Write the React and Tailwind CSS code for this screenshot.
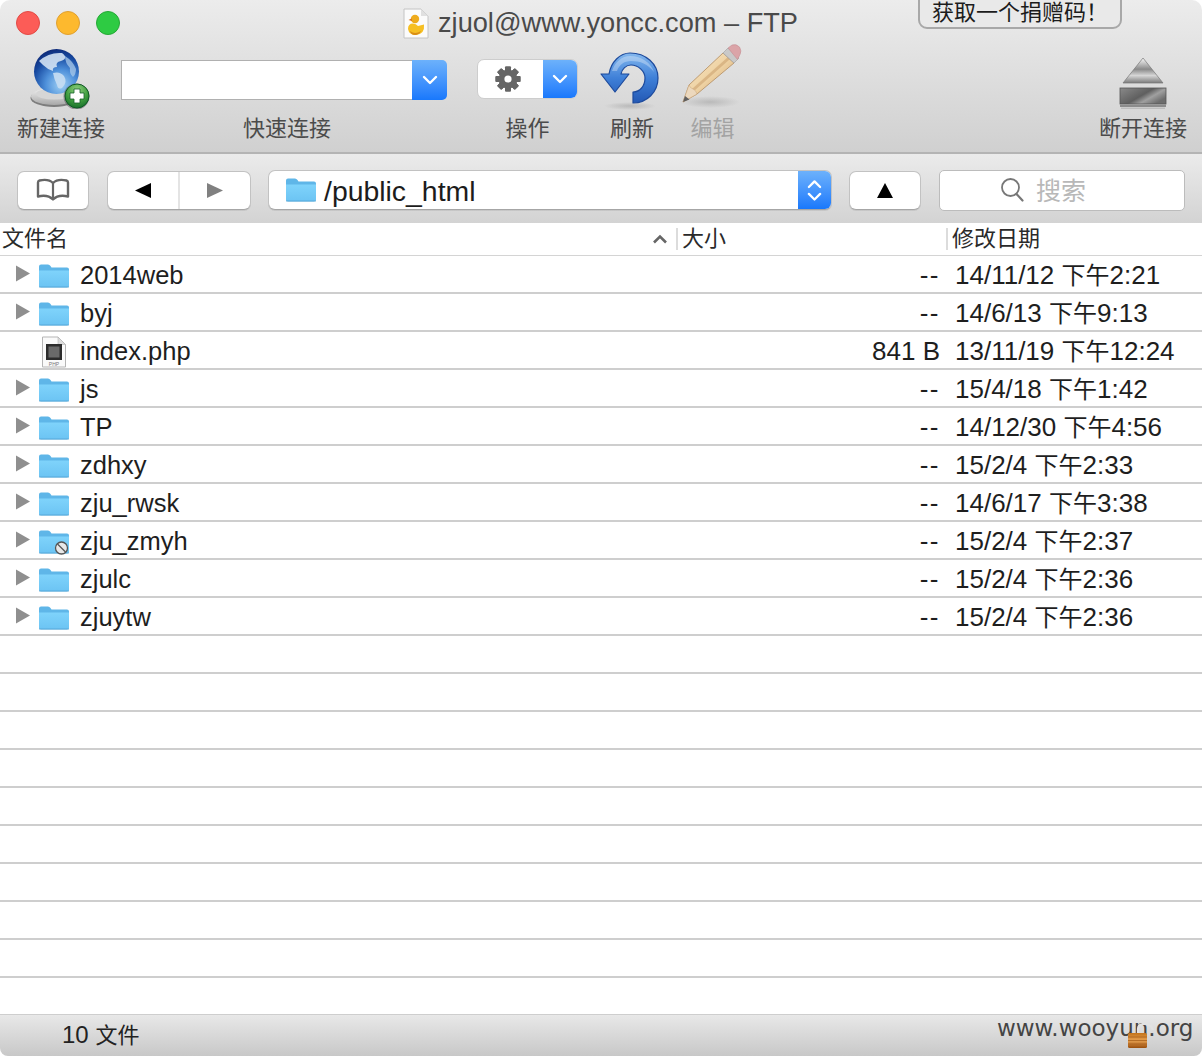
import React from "react";

const SANS = '"Liberation Sans", "Noto Sans CJK SC", sans-serif';

function Folder({ blocked }) {
  return (
    <svg width="32" height="26" viewBox="0 0 32 26" className="block">
      <defs>
        <linearGradient id="fb" x1="0" y1="0" x2="0" y2="1">
          <stop offset="0" stopColor="#7fd3fb" />
          <stop offset="1" stopColor="#6cc4f3" />
        </linearGradient>
      </defs>
      <path d="M1 3.5Q1 1.5 3 1.5H10Q11.5 1.5 12.5 3L13.5 4.5H29Q31 4.5 31 6.5V22.5Q31 24.5 29 24.5H3Q1 24.5 1 22.5Z" fill="#5fb6e8" />
      <path d="M1 7.5H31V22.5Q31 24 29 24H3Q1 24 1 22.5Z" fill="url(#fb)" />
      <path d="M1 24H31" stroke="#4f9fd0" strokeWidth="1" opacity="0.7" />
      {blocked && (
        <g>
          <circle cx="23.5" cy="19" r="6" fill="#e8e8e8" stroke="#555" strokeWidth="1.3" />
          <path d="M19.5 15L27.5 23" stroke="#555" strokeWidth="1.3" />
        </g>
      )}
    </svg>
  );
}

function Triangle() {
  return (
    <svg width="16" height="17" viewBox="0 0 16 17" className="block">
      <path d="M1 0.5L15 8.5L1 16.5Z" fill="#8f8f8f" />
    </svg>
  );
}

function PhpFile() {
  return (
    <svg width="26" height="32" viewBox="0 0 26 32" className="block">
      <path d="M1.5 1H17L24.5 8.5V31H1.5Z" fill="#fafafa" stroke="#b5b5b5" />
      <path d="M17 1V8.5H24.5Z" fill="#dcdcdc" stroke="#b5b5b5" strokeWidth="0.6" />
      <rect x="5" y="8" width="16" height="16" fill="#2c2c2c" />
      <rect x="7.5" y="10.5" width="11" height="11" fill="#6a6a6a" />
      <text x="13" y="29.5" textAnchor="middle" fontSize="5" fill="#777" fontFamily="Liberation Sans">PHP</text>
    </svg>
  );
}

function Chevron({ up = false, size = 16 }) {
  return (
    <svg width={size} height={size * 0.65} viewBox="0 0 16 10.4" className="block">
      <path d={up ? "M2 8.5L8 2.5L14 8.5" : "M2 2L8 8L14 2"} fill="none" stroke="#fff" strokeWidth="2.4" strokeLinecap="round" strokeLinejoin="round" />
    </svg>
  );
}

function Globe() {
  return (
    <svg width="64" height="60" viewBox="0 0 64 60" className="block">
      <defs>
        <radialGradient id="glo" cx="0.6" cy="0.8" r="0.85">
          <stop offset="0" stopColor="#9fd0f4" />
          <stop offset="0.4" stopColor="#4e90da" />
          <stop offset="0.75" stopColor="#16489f" />
          <stop offset="1" stopColor="#0c2470" />
        </radialGradient>
        <linearGradient id="bas" x1="0" y1="0" x2="0" y2="1">
          <stop offset="0" stopColor="#f2f2f2" />
          <stop offset="1" stopColor="#a8a8a8" />
        </linearGradient>
        <radialGradient id="grn" cx="0.5" cy="0.25" r="0.8">
          <stop offset="0" stopColor="#8fd07f" />
          <stop offset="0.6" stopColor="#3c9a3c" />
          <stop offset="1" stopColor="#146a2a" />
        </radialGradient>
      </defs>
      <ellipse cx="25" cy="49" rx="23.5" ry="9" fill="#5f5f5f" opacity="0.75" />
      <ellipse cx="25" cy="47.5" rx="23" ry="8.5" fill="url(#bas)" />
      <ellipse cx="25" cy="45" rx="18" ry="5.5" fill="#d6d6d6" />
      <circle cx="27.5" cy="22.5" r="22.5" fill="url(#glo)" />
      <path d="M10 12Q20 3 33 4Q40 9 32 12Q26 13 28 18Q23 18 24 22Q18 20 14 16Q12 14 10 12Z" fill="#d3e2f3" opacity="0.9" />
      <path d="M24 24Q31 22 35 27Q39 33 33 39Q29 41 28 36Q25 30 24 24Z" fill="#c5dcf2" opacity="0.92" />
      <path d="M36 7Q44 12 47 20Q47 25 44 28Q40 24 41 19Q36 14 36 7Z" fill="#a9c9ea" opacity="0.75" />
      <circle cx="47.5" cy="47.5" r="13" fill="#57585a" opacity="0.55" />
      <circle cx="48" cy="47" r="12" fill="url(#grn)" stroke="#0f5a25" strokeWidth="1" />
      <path d="M45 40H51V44H55V50H51V54H45V50H41V44H45Z" fill="#fff" stroke="#14602a" strokeWidth="0.8" />
    </svg>
  );
}

function Gear() {
  const teeth = [0, 45, 90, 135, 180, 225, 270, 315];
  return (
    <svg width="26" height="26" viewBox="0 0 26 26" className="block">
      {teeth.map((a) => (
        <rect key={a} x="10" y="0.5" width="6" height="25" rx="1" fill="#666" transform={`rotate(${a} 13 13)`} />
      ))}
      <circle cx="13" cy="13" r="9.5" fill="#666" />
      <circle cx="13" cy="13" r="3.6" fill="#fff" />
    </svg>
  );
}

function Refresh() {
  return (
    <svg width="62" height="60" viewBox="0 0 62 60" className="block">
      <defs>
        <linearGradient id="rf" x1="0" y1="0" x2="0" y2="1">
          <stop offset="0" stopColor="#84b8ee" />
          <stop offset="0.5" stopColor="#3f80d8" />
          <stop offset="1" stopColor="#2358b4" />
        </linearGradient>
        <radialGradient id="rfs">
          <stop offset="0" stopColor="#8a8a8a" stopOpacity="0.4" />
          <stop offset="1" stopColor="#8a8a8a" stopOpacity="0" />
        </radialGradient>
      </defs>
      <ellipse cx="30" cy="56" rx="26" ry="4" fill="url(#rfs)" />
      <path d="M1 24H9C11 12 20 3 30 3C46 3 58 14 58 28C58 42 47 53 33 53V42C40 42 45 36 45 28C45 21 38 15 31 15C26 15 22 19 21 24H29L15 42Z" fill="url(#rf)" stroke="#1d4a9c" strokeWidth="1.2" strokeLinejoin="round" />
      <path d="M12 21C15 12 22 6 30 6C42 6 51 13 54 22C48 14 40 11 31 11C24 11 19 15 17 21Z" fill="#fff" opacity="0.3" />
    </svg>
  );
}

function Pencil() {
  return (
    <svg width="62" height="64" viewBox="0 0 62 64" className="block">
      <defs>
        <linearGradient id="pb" x1="0" y1="0" x2="1" y2="1">
          <stop offset="0" stopColor="#f8e8cc" />
          <stop offset="0.5" stopColor="#efd3a4" />
          <stop offset="1" stopColor="#c89a66" />
        </linearGradient>
        <radialGradient id="ps">
          <stop offset="0" stopColor="#8a8a8a" stopOpacity="0.4" />
          <stop offset="1" stopColor="#8a8a8a" stopOpacity="0" />
        </radialGradient>
      </defs>
      <ellipse cx="30" cy="58" rx="30" ry="6" fill="url(#ps)" />
      <path d="M43 9L54 19L17 50L3 58L9 41Z" fill="url(#pb)" stroke="#b8946a" strokeWidth="0.9" />
      <path d="M49 14L13 46" stroke="#c99f6c" strokeWidth="3" opacity="0.55" />
      <path d="M9 41L3 58L17 50Q16 46 13 45Q10 44 9 41Z" fill="#ecd8bd" stroke="#c8a77e" strokeWidth="0.5" />
      <path d="M5 52L3 58L9.5 55.5Z" fill="#5f5f5f" />
      <path d="M43 9L48 4L59 14L54 19Z" fill="#c9c9c9" stroke="#a5a5a5" strokeWidth="0.7" />
      <path d="M48 4L52 1Q56 -0.5 59.5 3Q62 7 60 10.5L57.5 15.5Z" fill="#dba4a8" stroke="#c48f93" strokeWidth="0.6" />
    </svg>
  );
}

function Eject() {
  return (
    <svg width="52" height="54" viewBox="0 0 52 54" className="block">
      <defs>
        <linearGradient id="ej" x1="0" y1="0" x2="0" y2="1">
          <stop offset="0" stopColor="#fafafa" />
          <stop offset="0.45" stopColor="#8a8a8a" />
          <stop offset="0.7" stopColor="#d6d6d6" />
          <stop offset="1" stopColor="#7b7b7b" />
        </linearGradient>
        <linearGradient id="ej2" x1="0" y1="0" x2="1" y2="0.6">
          <stop offset="0" stopColor="#8a8a8a" />
          <stop offset="0.55" stopColor="#5f5f5f" />
          <stop offset="0.75" stopColor="#a0a0a0" />
          <stop offset="1" stopColor="#6d6d6d" />
        </linearGradient>
      </defs>
      <path d="M26 1L46 26H6Z" fill="url(#ej)" stroke="#777" strokeWidth="0.7" />
      <rect x="3" y="31" width="46" height="16" fill="url(#ej2)" stroke="#555" strokeWidth="0.8" />
      <rect x="3" y="47.5" width="46" height="2.5" fill="#8c8c8c" />
      <rect x="4" y="50.5" width="44" height="1.5" fill="#bdbdbd" />
    </svg>
  );
}

function Duck() {
  return (
    <svg width="26" height="31" viewBox="0 0 26 31" className="block">
      <path d="M1 1H18L25 8V30H1Z" fill="#fbfbfb" stroke="#c4c4c4" />
      <path d="M18 1V8H25Z" fill="#e0e0e0" />
      <circle cx="12" cy="11" r="4.2" fill="#eeab1c" />
      <path d="M8.5 10.5L5.5 12L9 13Z" fill="#d9701c" />
      <path d="M5 21Q5 15.5 10 15.5Q13 15.5 15 18L21 16.5Q22 26 13 27Q6 27 5 21Z" fill="#f6bf22" />
      <path d="M7 23Q12 27 18 23Q16 27 12 27Q8 27 7 23Z" fill="#d98d16" />
    </svg>
  );
}

function Book() {
  return (
    <svg width="34" height="24" viewBox="0 0 34 24" className="block">
      <path d="M17 5C14 2 8 1.5 3.5 2.5C2.5 2.8 2 3.5 2 4.5V18.5C7 17.2 13 17.5 17 21.5C21 17.5 27 17.2 32 18.5V4.5C32 3.5 31.5 2.8 30.5 2.5C26 1.5 20 2 17 5Z" fill="none" stroke="#666" strokeWidth="2.4" strokeLinejoin="round" />
      <path d="M17 5V21" stroke="#666" strokeWidth="2.2" />
    </svg>
  );
}

function Lock() {
  return (
    <svg width="27" height="26" viewBox="0 0 27 26" className="block">
      <defs>
        <linearGradient id="lk" x1="0" y1="0" x2="0" y2="1">
          <stop offset="0" stopColor="#c4741a" />
          <stop offset="0.5" stopColor="#e6a050" />
          <stop offset="1" stopColor="#9a4e0c" />
        </linearGradient>
      </defs>
      <path d="M11 10V6Q11 1 17 1Q24 1 26 7" fill="none" stroke="#e2e2e2" strokeWidth="2.2" />
      <rect x="1" y="10" width="19" height="15" rx="1.5" fill="url(#lk)" />
      <path d="M1 14H20M1 17.5H20M1 21H20" stroke="#a8611c" strokeWidth="0.8" />
    </svg>
  );
}

function ToolItem({ label, width, muted, children, className = "", labelClass = "" }) {
  return (
    <div className={`flex flex-col items-center ${className}`} style={{ width }}>
      <div className="flex h-[68px] w-full items-center justify-center">{children}</div>
      <div className={`mt-[1px] whitespace-nowrap text-[22px] leading-[28px] ${muted ? "text-[#a3a3a3]" : "text-[#4b4b4b]"} ${labelClass}`}>{label}</div>
    </div>
  );
}

const FILES = [
  { n: "2014web", s: "--", d: "14/11/12 ", t: "2:21" },
  { n: "byj", s: "--", d: "14/6/13 ", t: "9:13" },
  { n: "index.php", s: "841 B", d: "13/11/19 ", t: "12:24", file: true },
  { n: "js", s: "--", d: "15/4/18 ", t: "1:42" },
  { n: "TP", s: "--", d: "14/12/30 ", t: "4:56" },
  { n: "zdhxy", s: "--", d: "15/2/4 ", t: "2:33" },
  { n: "zju_rwsk", s: "--", d: "14/6/17 ", t: "3:38" },
  { n: "zju_zmyh", s: "--", d: "15/2/4 ", t: "2:37", blocked: true },
  { n: "zjulc", s: "--", d: "15/2/4 ", t: "2:36" },
  { n: "zjuytw", s: "--", d: "15/2/4 ", t: "2:36" },
];

const EMPTY = [0, 1, 2, 3, 4, 5, 6, 7, 8, 9];

const BTN = "bg-white rounded-[7px] border border-[#c2c2c2] border-b-[#a6a6a6] shadow-[0_1px_0_rgba(0,0,0,0.08)]";

export default function App() {
  return (
    <div className="relative flex h-[1056px] w-[1202px] flex-col overflow-hidden bg-white" style={{ fontFamily: SANS }}>
      <header className="h-[154px] shrink-0 rounded-t-[10px] border-b-2 border-[#b4b4b4] bg-gradient-to-b from-[#ececec] to-[#d0d0d0]">
        <div className="relative flex h-[46px] items-center">
          <div className="ml-[16px] flex gap-[16px]">
            <span className="h-[24px] w-[24px] rounded-full border border-[#e24a45] bg-[#fc5c57]" />
            <span className="h-[24px] w-[24px] rounded-full border border-[#e0a030] bg-[#fdb92e]" />
            <span className="h-[24px] w-[24px] rounded-full border border-[#25a836] bg-[#2ecb43]" />
          </div>
          <div className="ml-[283px] flex items-center gap-[9px]">
            <Duck />
            <span className="whitespace-nowrap text-[27.2px] leading-[30px] text-[#4a4a4a]">zjuol@www.yoncc.com – FTP</span>
          </div>
          <div className="absolute left-[918px] top-[-3px] flex h-[32px] w-[204px] items-center justify-center rounded-b-[9px] border-2 border-[#a8a8a8] bg-[#e9e9e9] text-[22px] leading-[26px] text-[#1c1c1c]">
            获取一个捐赠码！
          </div>
        </div>
        <div className="flex items-start pl-[17px]">
          <ToolItem label="新建连接" width={88}>
            <div className="mt-[-2px]"><Globe /></div>
          </ToolItem>
          <ToolItem label="快速连接" width={326} className="ml-[16px]" labelClass="pl-[6px]">
            <div className="flex h-[40px] w-full">
              <div className="flex-1 border-[1.5px] border-[#b0b0b0] border-r-0 bg-white" />
              <div className="flex w-[35px] items-center justify-center rounded-r-[5px] bg-gradient-to-b from-[#6cb1fb] to-[#1878fc]"><Chevron size={16} /></div>
            </div>
          </ToolItem>
          <ToolItem label="操作" width={101} className="ml-[30px]">
            <div className="mt-[-2px] flex h-[40px] w-full overflow-hidden rounded-[7px] border border-[#cdcdcd] bg-white">
              <div className="flex flex-1 items-center justify-center pr-[5px]"><Gear /></div>
              <div className="flex w-[34px] items-center justify-center bg-gradient-to-b from-[#6cb1fb] to-[#1878fc]"><Chevron size={16} /></div>
            </div>
          </ToolItem>
          <ToolItem label="刷新" width={62} className="ml-[22px]" labelClass="pl-[2px]">
            <Refresh />
          </ToolItem>
          <ToolItem label="编辑" width={62} muted className="ml-[18px]" labelClass="pl-[3px]">
            <div className="mt-[-8px]"><Pencil /></div>
          </ToolItem>
          <ToolItem label="断开连接" width={88} className="ml-[357px]">
            <div className="mt-[8px]"><Eject /></div>
          </ToolItem>
        </div>
      </header>

      <nav className="flex h-[69px] shrink-0 items-center bg-gradient-to-b from-[#ebebeb] to-[#d3d3d3] pl-[17px] pt-[3px]">
        <div className={`flex h-[39px] w-[72px] items-center justify-center ${BTN}`}><Book /></div>
        <div className={`ml-[18px] flex h-[39px] w-[144px] ${BTN}`}>
          <div className="flex w-[72px] items-center justify-center border-r-2 border-[#e4e4e4]">
            <svg width="16" height="15" viewBox="0 0 16 15"><path d="M0 7.5L16 0V15Z" fill="#000" /></svg>
          </div>
          <div className="flex flex-1 items-center justify-center">
            <svg width="16" height="15" viewBox="0 0 16 15"><path d="M16 7.5L0 0V15Z" fill="#808080" /></svg>
          </div>
        </div>
        <div className={`ml-[17px] flex h-[40px] w-[564px] overflow-hidden ${BTN}`}>
          <div className="flex flex-1 items-center pl-[16px]">
            <Folder />
            <span className="ml-[7px] pt-[2px] text-[28.4px] leading-[30px] text-[#1c1c1c]">/public_html</span>
          </div>
          <div className="flex w-[33px] flex-col items-center justify-center gap-[3px] bg-gradient-to-b from-[#6cb1fb] to-[#1878fc]">
            <Chevron up size={15} />
            <Chevron size={15} />
          </div>
        </div>
        <div className={`ml-[17px] flex h-[39px] w-[72px] items-center justify-center ${BTN}`}>
          <svg width="16" height="15" viewBox="0 0 16 15"><path d="M8 0L16 15H0Z" fill="#000" /></svg>
        </div>
        <div className="ml-[18px] flex h-[41px] w-[246px] items-center gap-[12px] rounded-[5px] border-[1.5px] border-[#bcbcbc] bg-white pl-[60px]">
          <svg width="24" height="26" viewBox="0 0 24 26">
            <circle cx="10.5" cy="10.5" r="8.5" fill="none" stroke="#777" strokeWidth="1.8" />
            <path d="M16.5 17L22.5 23.5" stroke="#777" strokeWidth="2.2" strokeLinecap="round" />
          </svg>
          <span className="pt-[2px] text-[25px] leading-[30px] text-[#b8b8b8]">搜索</span>
        </div>
      </nav>

      <div className="flex h-[33px] shrink-0 items-center border-b border-[#d4d4d4] text-[22px] leading-[28px] text-[#2a2a2a]">
        <div className="flex w-[676px] items-center pl-[2px]">
          <span className="flex-1">文件名</span>
          <svg width="16" height="10" viewBox="0 0 16 10" className="mr-[8px]"><path d="M2 8.5L8 2.5L14 8.5" fill="none" stroke="#666" strokeWidth="2.6" /></svg>
        </div>
        <div className="h-[22px] w-[2px] bg-[#dcdcdc]" />
        <div className="w-[268px] pl-[4px]">大小</div>
        <div className="h-[22px] w-[2px] bg-[#dcdcdc]" />
        <div className="pl-[4px]">修改日期</div>
      </div>

      <div className="flex-1 overflow-hidden">
        {FILES.map((f) => (
          <div key={f.n} className="flex h-[38px] items-center border-b-2 border-[#cecece] pt-[4px] text-[26px] leading-[30px] text-[#1e1e1e]">
            <div className="ml-[15px] w-[16px] -translate-y-[3px]">{!f.file && <Triangle />}</div>
            <div className="ml-[7px] flex w-[32px] justify-center">{f.file ? <PhpFile /> : <Folder blocked={f.blocked} />}</div>
            <div className="ml-[10px] w-[400px] flex-1 -translate-y-[1px] whitespace-nowrap text-[25.5px]">{f.n}</div>
            <div className={`w-[121px] -translate-y-[1px] whitespace-nowrap text-right ${f.s === "--" ? "tracking-[1.5px]" : ""}`}>{f.s}</div>
            <div className="ml-[15px] w-[247px] -translate-y-[1px] whitespace-nowrap">{f.d}<span className="text-[24px]">下午</span>{f.t}</div>
          </div>
        ))}
        {EMPTY.map((i) => (
          <div key={i} className="h-[38px] border-b-2 border-[#cecece]" />
        ))}
      </div>

      <footer className="relative flex h-[41px] shrink-0 items-center rounded-b-[8px] bg-gradient-to-b from-[#e8e8e8] to-[#c8c8c8] pl-[62px]">
        <span className="text-[24px] leading-[28px] text-[#222]">10 <span className="text-[22px]">文件</span></span>
        <span className="absolute left-[997px] top-[-2px] whitespace-nowrap text-[23px] leading-[30px] text-[#444]" style={{ fontFamily: '"DejaVu Sans", sans-serif' }}>www.wooyun.org</span>
        <div className="absolute left-[1127px] top-[8px]"><Lock /></div>
      </footer>
    </div>
  );
}
